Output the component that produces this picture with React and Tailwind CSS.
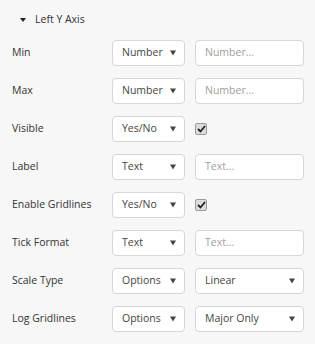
import React from 'react';

const rows = [
  { label: 'Min', type: 'Number', kind: 'input', value: 'Number...' },
  { label: 'Max', type: 'Number', kind: 'input', value: 'Number...' },
  { label: 'Visible', type: 'Yes/No', kind: 'check' },
  { label: 'Label', type: 'Text', kind: 'input', value: 'Text...' },
  { label: 'Enable Gridlines', type: 'Yes/No', kind: 'check' },
  { label: 'Tick Format', type: 'Text', kind: 'input', value: 'Text...' },
  { label: 'Scale Type', type: 'Options', kind: 'select', value: 'Linear' },
  { label: 'Log Gridlines', type: 'Options', kind: 'select', value: 'Major Only' },
];

function Arrow() {
  return (
    <svg width="6" height="6" viewBox="0 0 6 6" className="shrink-0">
      <path d="M0 0.5 L6 0.5 L3 5.5 Z" fill="#444" />
    </svg>
  );
}

function Select({ text, className }) {
  return (
    <div className={`h-[26px] bg-white border border-[#d6d6d6] rounded-[4px] flex items-center pl-[9px] pr-[8px] ${className}`}>
      <span className="flex-1 text-[#444]">{text}</span>
      <Arrow />
    </div>
  );
}

export default function App() {
  return (
    <div className="w-[315px] h-[344px] bg-[#f7f7f7] text-[#333] text-[10.5px] overflow-hidden" style={{ fontFamily: '"Open Sans", sans-serif' }}>
      <div className="flex items-center h-[38px] pl-[20px] pt-[1px]">
        <svg width="6" height="4" viewBox="0 0 6 4" className="mr-[9px]">
          <path d="M0 0 L6 0 L3 4 Z" fill="#222" />
        </svg>
        <span className="text-[#333]">Left Y Axis</span>
      </div>
      <div className="flex flex-col gap-[12px] pt-[2px]">
        {rows.map((r) => (
          <div key={r.label} className="flex items-center h-[26px] pl-[12px]">
            <span className="w-[100px]">{r.label}</span>
            <Select text={r.type} className="w-[73px]" />
            <div className="ml-[10px]">
              {r.kind === 'input' && (
                <div className="w-[109px] h-[26px] bg-white border border-[#d6d6d6] rounded-[4px] flex items-center pl-[9px] text-[#a0a0a0]">
                  {r.value}
                </div>
              )}
              {r.kind === 'check' && (
                <div className="w-[12px] h-[12px] border border-[#999] rounded-[2px] bg-[#dcdcdc] flex items-center justify-center">
                  <svg width="9" height="8" viewBox="0 0 9 8">
                    <path d="M1 4 L3.5 6.5 L8 1" stroke="#222" strokeWidth="1.8" fill="none" />
                  </svg>
                </div>
              )}
              {r.kind === 'select' && <Select text={r.value} className="w-[109px]" />}
            </div>
          </div>
        ))}
      </div>
    </div>
  );
}
